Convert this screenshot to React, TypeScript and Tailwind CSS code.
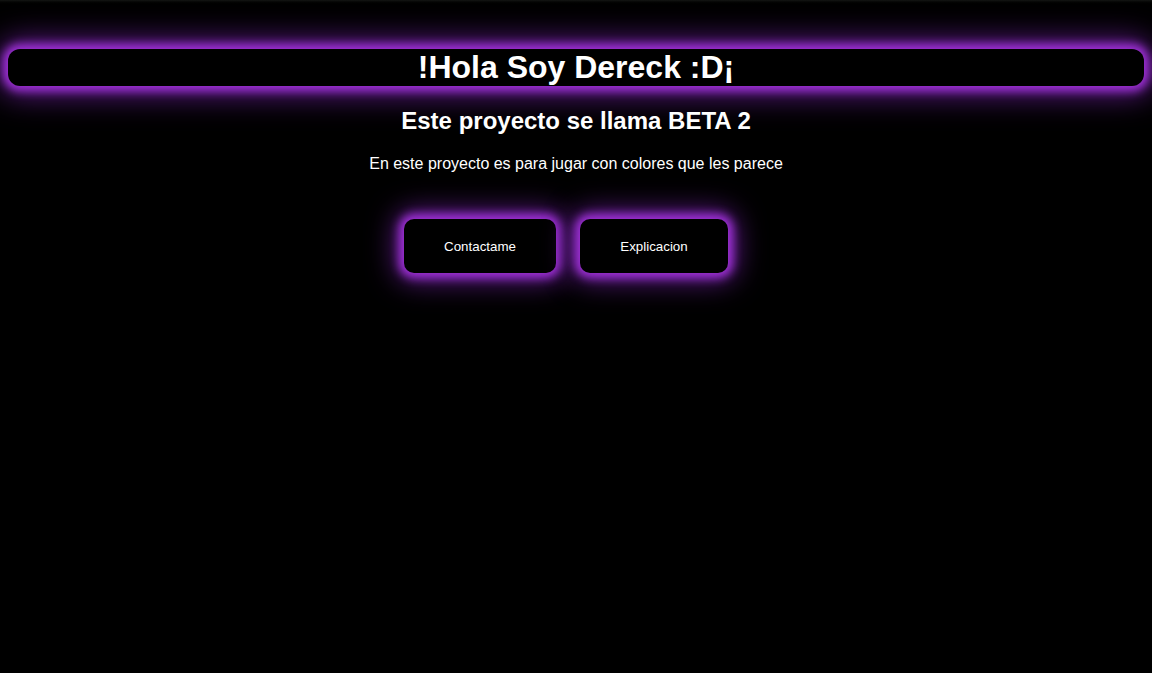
export default function App() {
  return (
    <div
      className="relative min-h-[673px] bg-black text-white"
      style={{ fontFamily: '"Liberation Sans", Arial, sans-serif' }}
    >
      {/* faint band at the very top */}
      <div className="absolute inset-x-0 top-0 h-[5px] bg-gradient-to-b from-[#141614] to-black" />

      <div className="px-2 pt-[49px]">
        <h1 className="h-[37px] rounded-[12px] bg-black text-center text-[32px] font-bold leading-[37px] shadow-[0_0_10px_5px_#9e30d6,0_0_30px_9px_#5e1c88]">
          !Hola Soy Dereck :D¡
        </h1>
      </div>

      <h2 className="mt-[21px] text-center text-[24px] font-bold leading-[28px]">
        Este proyecto se llama BETA 2
      </h2>

      <p className="mt-[20px] text-center text-[16px] leading-[18px]">
        En este proyecto es para jugar con colores que les parece
      </p>

      <div className="mt-[46px] flex justify-center gap-6 pr-[20px]">
        <button className="h-[54px] w-[152px] rounded-[10px] bg-black pt-[2px] text-[13.33px] text-white shadow-[0_0_10px_5px_#9e30d6,0_0_28px_8px_#5e1c88]">
          Contactame
        </button>
        <button className="h-[54px] w-[148px] rounded-[10px] bg-black pt-[2px] text-[13.33px] text-white shadow-[0_0_10px_5px_#9e30d6,0_0_28px_8px_#5e1c88]">
          Explicacion
        </button>
      </div>
    </div>
  );
}
